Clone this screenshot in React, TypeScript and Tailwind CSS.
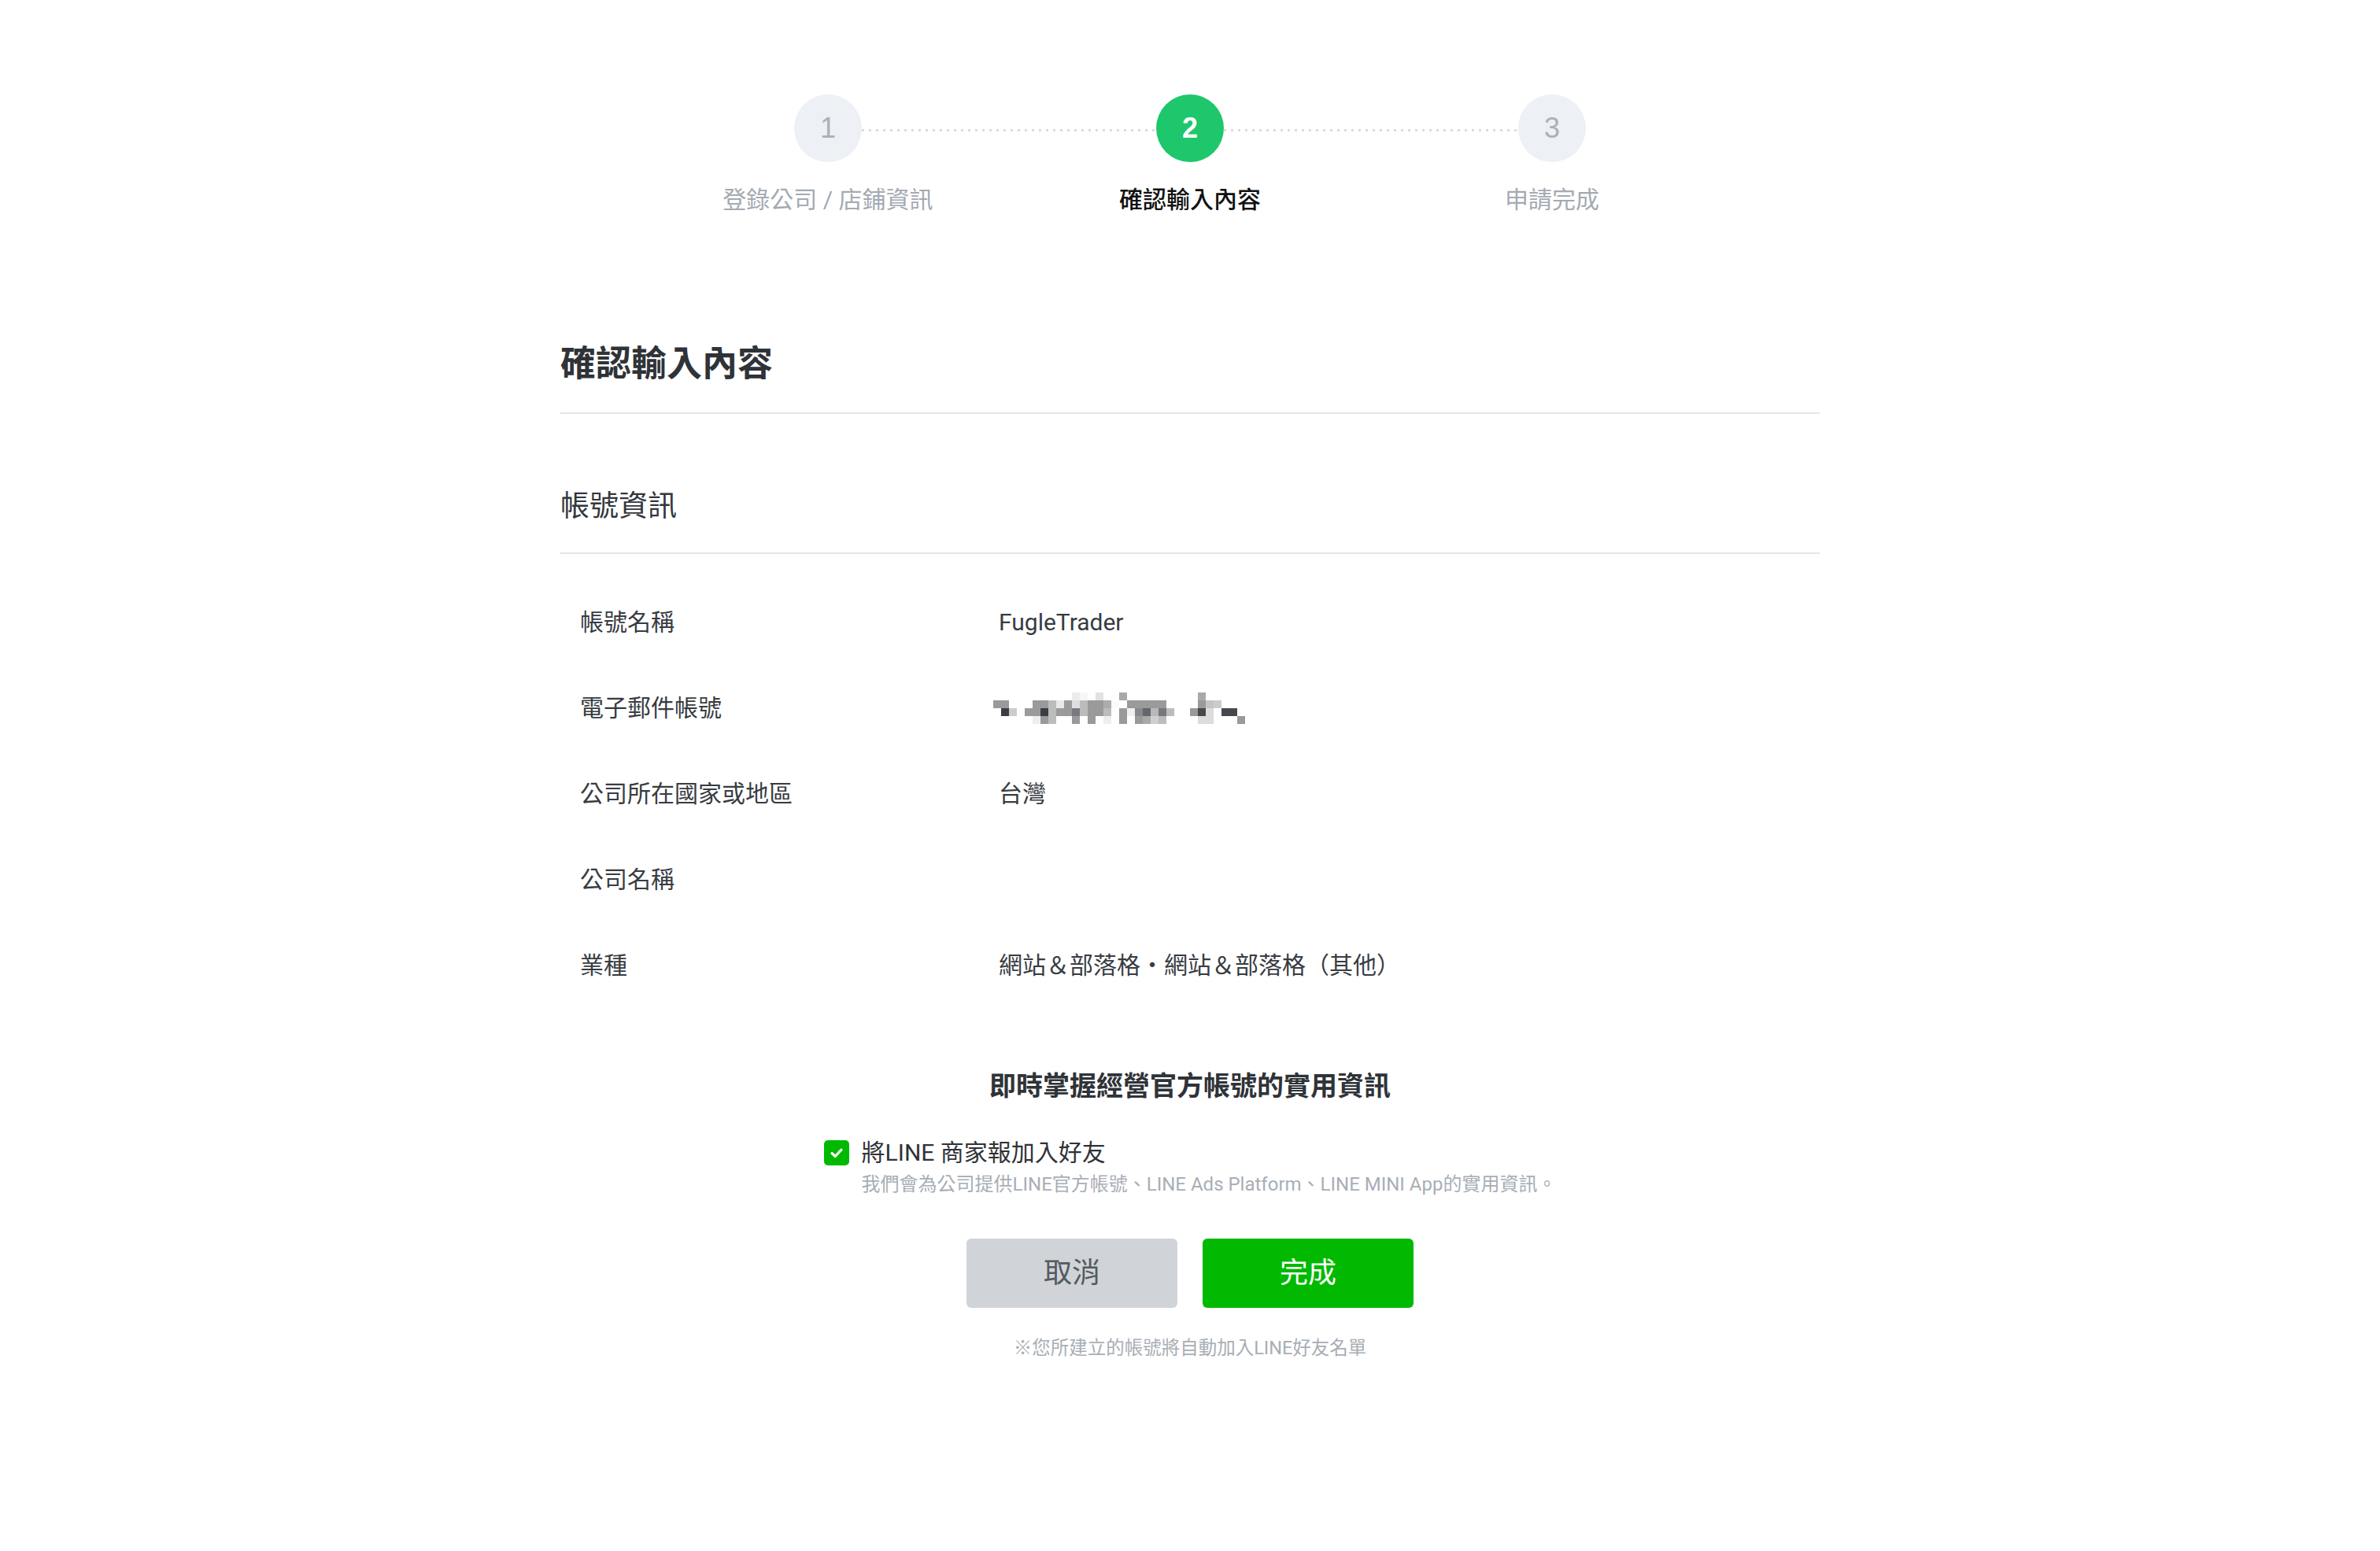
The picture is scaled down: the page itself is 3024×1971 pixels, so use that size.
import React from "react";

const blocks: [number, number, string][] = [
  [10, 0, "#ececec"], [11, 0, "#f7f7f7"], [13, 0, "#e2e2e2"], [16, 0, "#a9a9a9"], [26, 0, "#a9a9a9"],
  [0, 1, "#9a9a9a"], [1, 1, "#9a9a9a"], [5, 1, "#9a9a9a"], [6, 1, "#9a9a9a"], [7, 1, "#bcbcbc"], [8, 1, "#e8e8e8"],
  [9, 1, "#9a9a9a"], [10, 1, "#dedede"], [11, 1, "#bcbcbc"], [12, 1, "#9a9a9a"], [13, 1, "#9a9a9a"], [14, 1, "#a9adb1"],
  [15, 1, "#fafafa"], [17, 1, "#9a9a9a"], [18, 1, "#9a9a9a"], [19, 1, "#9a9a9a"], [20, 1, "#9a9a9a"], [21, 1, "#9a9a9a"],
  [26, 1, "#9a9a9a"], [27, 1, "#c4c4c4"], [28, 1, "#cccccc"],
  [1, 2, "#3a3d42"], [2, 2, "#cccccc"], [4, 2, "#9a9a9a"], [5, 2, "#9a9a9a"], [6, 2, "#3a3d42"], [7, 2, "#bcbcbc"],
  [8, 2, "#9a9a9a"], [9, 2, "#9a9a9a"], [10, 2, "#777a7e"], [11, 2, "#bcbcbc"], [12, 2, "#9a9a9a"], [13, 2, "#9a9a9a"],
  [14, 2, "#bcbcbc"], [16, 2, "#9a9a9a"], [17, 2, "#f0f0f0"], [18, 2, "#86898d"], [19, 2, "#62656a"], [20, 2, "#b8b8b8"],
  [21, 2, "#75787c"], [22, 2, "#bcbcbc"], [25, 2, "#9a9a9a"], [26, 2, "#45484d"], [27, 2, "#dcdcdc"], [29, 2, "#45484d"],
  [30, 2, "#45484d"],
  [5, 3, "#eeeeee"], [6, 3, "#9a9a9a"], [7, 3, "#bcbcbc"], [10, 3, "#9a9a9a"], [12, 3, "#9a9a9a"], [14, 3, "#eeeeee"],
  [16, 3, "#9a9a9a"], [18, 3, "#9a9a9a"], [19, 3, "#a9a9a9"], [20, 3, "#cfcfcf"], [21, 3, "#bcbcbc"], [26, 3, "#dcdcdc"],
  [27, 3, "#dcdcdc"], [31, 3, "#9a9a9a"],
];

function Mosaic() {
  return (
    <svg width="320" height="40" viewBox="0 0 320 40" className="block -ml-[7px]">
      {blocks.map(([c, r, col], i) => (
        <rect key={i} x={c * 10} y={r * 10} width="10" height="10" fill={col} />
      ))}
    </svg>
  );
}

function Line() {
  return (
    <div className="flex-1 h-[3px] mt-[4px] bg-[linear-gradient(to_right,#d9dce1_34%,transparent_34%)] bg-[length:9px_3px] bg-repeat-x" />
  );
}

const rows: [string, React.ReactNode][] = [
  ["帳號名稱", "FugleTrader"],
  ["電子郵件帳號", <Mosaic />],
  ["公司所在國家或地區", "台灣"],
  ["公司名稱", ""],
  ["業種", "網站＆部落格・網站＆部落格（其他）"],
];

export default function App() {
  return (
    <div className="min-h-[1971px] bg-white font-['Roboto','Noto_Sans_CJK_TC','Noto_Sans',sans-serif] text-[#383c42]">
      {/* Stepper */}
      <div className="pt-[120px]">
        <div className="w-[1380px] mx-auto px-[187px] flex items-center">
          <div className="w-[86px] h-[86px] rounded-full bg-[#edf0f4] flex items-center justify-center text-[36px] text-[#abb0b7] font-['Liberation_Sans',sans-serif]">
            1
          </div>
          <Line />
          <div className="w-[86px] h-[86px] rounded-full bg-[#1ec76b] flex items-center justify-center text-[36px] text-white font-bold font-['Liberation_Sans',sans-serif]">
            2
          </div>
          <Line />
          <div className="w-[86px] h-[86px] rounded-full bg-[#edf0f4] flex items-center justify-center text-[36px] text-[#abb0b7] font-['Liberation_Sans',sans-serif]">
            3
          </div>
        </div>
        <div className="w-[1380px] mx-auto grid grid-cols-3 text-center mt-[25px] text-[30px] leading-[45px]">
          <div className="text-[#a4aab2]">登錄公司 / 店鋪資訊</div>
          <div className="text-[#111111] font-medium">確認輸入內容</div>
          <div className="text-[#a4aab2]">申請完成</div>
        </div>
      </div>

      {/* Content */}
      <div className="w-[1600px] mx-auto mt-[157px]">
        <h1 className="text-[45px] leading-[60px] font-bold text-[#2f3338] pb-[31px] border-b-2 border-[#e5e5e5]">
          確認輸入內容
        </h1>
        <h2 className="mt-[92px] text-[37px] leading-[52px] text-[#33373c] pb-[32px] border-b-2 border-[#e5e5e5]">
          帳號資訊
        </h2>
        <div className="mt-[32px]">
          {rows.map(([k, v], i) => (
            <div key={i} className="grid grid-cols-[557px_1fr] h-[109px] items-center text-[30px] leading-[45px] text-[#383c42]">
              <div className="pl-[25px]">{k}</div>
              <div>{v}</div>
            </div>
          ))}
        </div>

        <div className="mt-[74px] text-center text-[34px] leading-[50px] font-bold text-[#2f3338]">
          即時掌握經營官方帳號的實用資訊
        </div>

        <div className="mt-[37px] w-fit mx-auto flex flex-col">
          <div className="flex items-center gap-[16px]">
            <div className="w-[32px] h-[32px] rounded-[5px] bg-[#00b900] flex items-center justify-center">
              <svg width="20" height="20" viewBox="0 0 20 20">
                <path d="M4 10.5 L8.2 14.5 L16 6.2" fill="none" stroke="white" strokeWidth="3.2" strokeLinecap="round" strokeLinejoin="round" />
              </svg>
            </div>
            <span className="text-[30px] leading-[46px] text-[#2f3338]">將LINE 商家報加入好友</span>
          </div>
          <div className="pl-[48px] text-[24px] leading-[34px] text-[#a8aeb5]">
            我們會為公司提供LINE官方帳號、LINE Ads Platform、LINE MINI App的實用資訊。
          </div>
        </div>

        <div className="mt-[52px] flex justify-center gap-[32px]">
          <button className="w-[268px] h-[88px] rounded-[6px] bg-[#d0d4d8] text-[36px] text-[#555a60]">取消</button>
          <button className="w-[268px] h-[88px] rounded-[6px] bg-[#00b900] text-[36px] text-white">完成</button>
        </div>

        <div className="mt-[34px] text-center text-[23.5px] leading-[34px] text-[#a8aeb5]">
          ※您所建立的帳號將自動加入LINE好友名單
        </div>
      </div>
    </div>
  );
}
